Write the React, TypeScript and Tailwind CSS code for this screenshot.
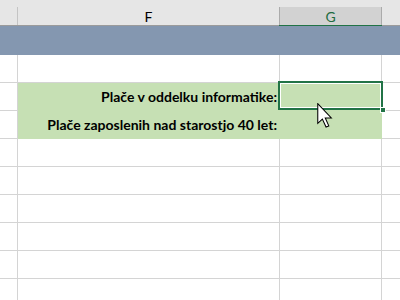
import React from "react";

const font = { fontFamily: "Lato, 'Liberation Sans', sans-serif" };

function Row({ green, text, selected }: { green?: boolean; text?: string; selected?: boolean }) {
  return (
    <div className="flex h-[28px]">
      <div className="w-[17px] border-b border-[#d4d4d4]" />
      <div className="w-px bg-[#d4d4d4]" />
      <div
        className={
          green
            ? "w-[364px] flex bg-[#c6e0b4] border-b border-[#c6e0b4]"
            : "w-[364px] flex"
        }
      >
        <div
          className={
            green
              ? "w-[261px] h-[27px] flex items-center justify-end pr-[2px] text-[14px] font-bold text-black"
              : "w-[261px] h-[27px] border-b border-[#d4d4d4] box-content"
          }
        >
          {text}
        </div>
        <div className={green ? "w-px" : "w-px h-[28px] bg-[#d4d4d4]"} />
        <div className={green ? "w-[101px] relative" : "w-[101px] h-[27px] border-b border-[#d4d4d4] box-content"}>
          {selected && (
            <div className="absolute left-[-2px] top-[-2px] w-[105px] h-[29px] border-2 border-[#217346]">
              <div className="w-full h-full border border-white" />
              <div className="absolute right-[-5px] bottom-[-5px] w-[6px] h-[6px] bg-[#217346] border border-white" />
            </div>
          )}
        </div>
        <div className={green ? "w-px" : "w-px h-[28px] bg-[#d4d4d4]"} />
      </div>
      <div className="flex-1 border-b border-[#d4d4d4]" />
    </div>
  );
}

export default function App() {
  return (
    <div className="w-[400px] h-[300px] overflow-hidden bg-white relative" style={font}>
      {/* column header */}
      <div className="h-[25px] bg-[#e6e6e6] flex items-end">
        <div className="w-[17px]" />
        <div className="w-px h-[18px] bg-[#c4c4c4]" />
        <div className="w-[261px] h-[18px] flex items-center justify-center text-[14px] text-black pt-[1px]">
          F
        </div>
        <div className="w-[103px] h-[18px] bg-[#d2d2d2] border-x border-[#ababab] flex items-center justify-center text-[14px] text-[#1e6b41] pt-[1px]">
          G
        </div>
        <div className="flex-1" />
      </div>
      <div className="h-px flex">
        <div className="w-[279px] bg-[#9b9b9b]" />
        <div className="w-[103px] bg-[#217346]" />
        <div className="flex-1 bg-[#9b9b9b]" />
      </div>
      {/* band */}
      <div className="h-[29px] bg-[#8497b0]" />
      {/* first row */}
      <div className="flex h-[28px]">
        <div className="w-[17px] border-b border-[#d4d4d4]" />
        <div className="w-px bg-[#d4d4d4]" />
        <div className="w-[261px] border-b border-[#d4d4d4]" />
        <div className="w-px bg-[#d4d4d4]" />
        <div className="w-[101px] border-b border-[#d4d4d4]" />
        <div className="w-px bg-[#d4d4d4]" />
        <div className="flex-1 border-b border-[#d4d4d4]" />
      </div>
      <Row green text="Plače v oddelku informatike:" selected />
      <Row green text="Plače zaposlenih nad starostjo 40 let:" />
      <Row />
      <Row />
      <Row />
      <Row />
      <Row />
      <Row />
      {/* cursor */}
      <svg
        className="absolute left-[317px] top-[103px]"
        width="16"
        height="25"
        viewBox="0 0 12 19"
      >
        <path
          d="M0.5 0.5 L0.5 15.5 L4 12.2 L6.8 18.3 L8.9 17.4 L6.2 11.4 L10.8 11.4 Z"
          fill="white"
          stroke="black"
          strokeWidth="0.8"
          strokeLinejoin="miter"
        />
      </svg>
    </div>
  );
}
